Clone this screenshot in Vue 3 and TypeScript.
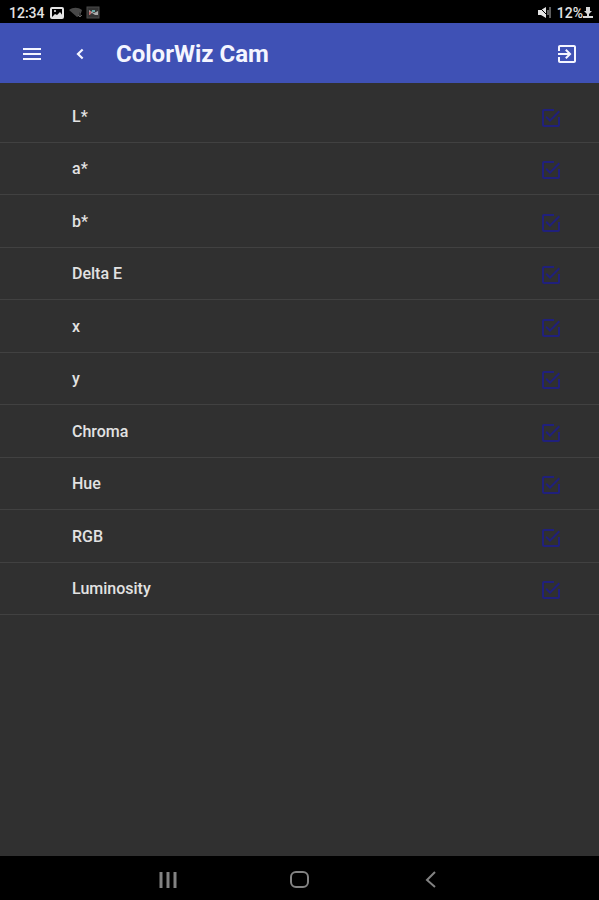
<script setup lang="ts">
import { ref } from 'vue'

interface Field {
  id: string
  label: string
  shown: boolean
}

const names: string[] = ['L*', 'a*', 'b*', 'Delta E', 'x', 'y', 'Chroma', 'Hue', 'RGB', 'Luminosity']
const fields = ref<Field[]>(names.map((label, i) => ({ id: `field-${i}`, label, shown: true })))
</script>

<template>
  <div class="screen">
    <div class="status">
      <span class="clock">12:34</span>
      <svg class="status-icon" viewBox="0 0 14 14" aria-hidden="true">
        <rect x="1" y="2" width="12" height="10" rx="1" fill="none" stroke="#e4e4e4" stroke-width="2" />
        <path d="M2 11l3-3 2 1 3-3 3 4v1z" fill="#e4e4e4" />
        <circle cx="5" cy="5" r="1" fill="#e4e4e4" />
      </svg>
      <svg class="status-icon second" viewBox="0 0 14 14" aria-hidden="true">
        <path d="M0 4C4 1 9 1 13 4L12 7l-2-1v4L8 11z" fill="#484848" />
        <path d="M11 6v5M9 9l2 2 2-2" fill="none" stroke="#666" stroke-width="1" />
      </svg>
      <svg class="status-icon third" viewBox="0 0 14 14" aria-hidden="true">
        <rect x="1" y="1" width="12" height="11" fill="#333" stroke="#4c4c4c" />
        <path d="M3 4l5 3 4-2v4H9L6 7 3 9z" fill="#aaa" />
        <path d="M3 6l2-1v3l-2 1z" fill="#b66" />
        <path d="M6 4h3v2H6z" fill="#6aa" />
      </svg>
      <span class="spacer"></span>
      <svg class="status-icon" viewBox="0 0 14 14" aria-hidden="true">
        <path d="M0 4h3l5-3v11L3 9H0z" fill="#e4e4e4" />
        <path d="M1 1l11 11" stroke="#000" stroke-width="1" />
        <path d="M10 4v5M12 1v11" stroke="#bbb" stroke-width="1" />
      </svg>
      <span class="charge">12%</span>
      <svg class="battery" viewBox="0 0 10 14" aria-hidden="true">
        <path d="M3 1h4v4h2L5 9 1 5h2zM0 10h10v2H0z" fill="#d8d8d8" />
        <path d="M5 8v3" stroke="#d8d8d8" stroke-width="2" />
      </svg>
    </div>

    <header class="bar">
      <button class="tool" type="button" aria-label="Menu">
        <svg viewBox="0 0 24 24"><path d="M3 18h18v-2H3zm0-5h18v-2H3zm0-7v2h18V6z" /></svg>
      </button>
      <button class="tool" type="button" aria-label="Back">
        <svg viewBox="0 0 24 24"><path d="M15.4 8.2L13.9 6.7 8.4 12l5.5 5.3 1.5-1.5-3.9-3.8z" /></svg>
      </button>
      <h1>ColorWiz Cam</h1>
      <button class="tool" type="button" aria-label="Exit">
        <svg viewBox="0 0 24 24">
          <path d="M10.09 15.59L11.5 17l5-5-5-5-1.41 1.41L12.67 11H3v2h9.67zM19 3H5c-1.11 0-2 .9-2 2v4h2V5h14v14H5v-4H3v4c0 1.1.89 2 2 2h14c1.1 0 2-.9 2-2V5c0-1.1-.9-2-2-2z" />
        </svg>
      </button>
    </header>

    <main>
      <ul class="list">
        <li v-for="field in fields" :key="field.id" class="row">
          <label :for="field.id">{{ field.label }}</label>
          <span class="check">
            <svg viewBox="0 0 24 24" aria-hidden="true">
              <path
                v-if="field.shown"
                d="M19 19H5V5h10V3H5c-1.11 0-2 .89-2 2v14a2 2 0 0 0 2 2h14a2 2 0 0 0 2-2v-8h-2zM7.91 10.08L6.5 11.5 11 16 21 6l-1.41-1.42L11 13.17z"
              />
              <path v-else d="M19 3H5a2 2 0 0 0-2 2v14a2 2 0 0 0 2 2h14a2 2 0 0 0 2-2V5a2 2 0 0 0-2-2zm0 2v14H5V5z" />
            </svg>
            <input :id="field.id" v-model="field.shown" type="checkbox" />
          </span>
        </li>
      </ul>
    </main>

    <nav class="system">
      <button type="button" aria-label="Recent apps">
        <svg viewBox="0 0 24 24"><path d="M5 4v16M12 4v16M19 4v16" stroke-width="3" /></svg>
      </button>
      <button type="button" aria-label="Home">
        <svg viewBox="0 0 24 24"><rect x="4" y="4" width="17" height="15" rx="5" /></svg>
      </button>
      <button type="button" aria-label="Back">
        <svg viewBox="0 0 24 24"><path d="M16 4l-8 8 8 7" /></svg>
      </button>
    </nav>
  </div>
</template>

<style>
body {
  margin: 0;
  background: #303030;
}
</style>

<style scoped>
.screen {
  display: flex;
  flex-direction: column;
  min-height: 100vh;
  background: #303030;
  color: #e2e2e2;
  font-family: Roboto, "Liberation Sans", sans-serif;
}

button {
  display: grid;
  place-items: center;
  padding: 0;
  border: 0;
  background: none;
  color: inherit;
  cursor: pointer;
}

svg {
  display: block;
}

.status {
  display: flex;
  align-items: center;
  box-sizing: border-box;
  height: 23px;
  padding: 2px 6px 0 9px;
  background: #000;
  font-size: 14px;
  font-weight: 500;
  line-height: 20px;
}

.clock {
  margin-right: 5px;
}

.status-icon {
  width: 14px;
  height: 14px;
}

.second {
  margin-left: 5px;
}

.third {
  margin-left: 3px;
}

.spacer {
  flex: 1;
}

.charge {
  margin-left: 5px;
}

.battery {
  width: 10px;
  height: 14px;
}

.bar {
  display: flex;
  align-items: center;
  box-sizing: border-box;
  height: 60px;
  padding: 2px 20px 0;
  background: #3f51b5;
  color: #f4f5ff;
}

.tool {
  width: 24px;
  height: 24px;
}

.tool + .tool {
  margin-left: 24px;
}

.tool svg {
  width: 24px;
  height: 24px;
  fill: currentColor;
}

h1 {
  flex: 1;
  margin: 0 0 0 24px;
  font-size: 24px;
  font-weight: 700;
  line-height: 28px;
}

main {
  flex: 1;
  padding-top: 7px;
}

.list {
  display: grid;
  grid-auto-rows: 1fr;
  min-height: 525px;
  margin: 0;
  padding: 0;
  list-style: none;
}

.row {
  display: flex;
  align-items: center;
  justify-content: space-between;
  box-sizing: border-box;
  padding: 2px 36px 0 72px;
  border-bottom: 1px solid #414141;
}

.row label {
  flex: 1;
  font-size: 16px;
  font-weight: 500;
  line-height: 24px;
}

.check {
  position: relative;
  width: 24px;
  height: 24px;
  margin-top: 2px;
}

.check svg {
  width: 24px;
  height: 24px;
  fill: #20207c;
}

.check input {
  position: absolute;
  inset: 0;
  width: 100%;
  height: 100%;
  margin: 0;
  opacity: 0;
  cursor: pointer;
}

.system {
  display: flex;
  justify-content: space-around;
  height: 44px;
  padding: 0 102px;
  background: #000;
  color: #828282;
}

.system button {
  width: 48px;
  height: 48px;
}

.system svg {
  width: 24px;
  height: 24px;
  fill: none;
  stroke: currentColor;
  stroke-width: 2;
}
</style>
